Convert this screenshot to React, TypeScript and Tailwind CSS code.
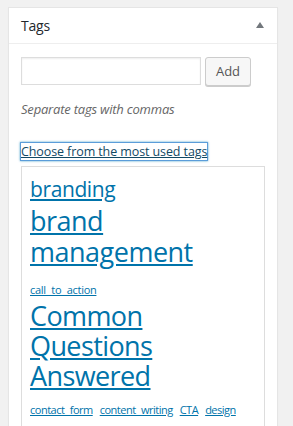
export default function App() {
  const small = ["contact form", "content writing", "CTA", "design"];

  return (
    <div className="h-[426px] overflow-hidden bg-[#f1f1f1] pt-[7px] pl-[8px] pr-[15px] font-['Open_Sans',sans-serif]">
      <div className="border border-[#e5e5e5] bg-white shadow-[0_1px_1px_rgba(0,0,0,0.04)]">
        <div className="flex h-[36px] items-center justify-between border-b border-[#eeeeee] pl-[12px] pr-[13px]">
          <h2 className="text-[14px] tracking-[-0.2px] text-[#23282d]">Tags</h2>
          <svg width="8" height="6" viewBox="0 0 8 6" className="mb-[1px]">
            <path d="M4 0L8 6H0Z" fill="#72777c" />
          </svg>
        </div>

        <div className="px-[12px] pt-[13px]">
          <div className="flex items-start">
            <input
              type="text"
              className="h-[28px] w-[180px] border border-[#dddddd] bg-white px-2 shadow-[inset_0_1px_2px_rgba(0,0,0,0.07)] outline-none"
            />
            <button className="ml-[4px] h-[29px] w-[46px] rounded-[3px] border border-[#cccccc] bg-[#f7f7f7] text-[13px] text-[#555555] shadow-[0_1px_0_#cccccc]">
              Add
            </button>
          </div>

          <p className="mt-[14px] text-[13px] italic leading-[18px] tracking-[-0.2px] text-[#666666]">
            Separate tags with commas
          </p>

          <div className="mt-[24px] flex">
            <a
              href="#"
              className="-ml-[1px] border border-[#5b9dd9] text-[12.5px] leading-[17px] tracking-[-0.1px] text-[#124964] underline shadow-[0_0_2px_rgba(30,140,190,0.8)]"
            >
              Choose from the most used tags
            </a>
          </div>

          <div className="mt-[5px] h-[300px] border border-[#dddddd] px-[8px] pt-[7px] text-[#0073aa]">
            <div>
              <a href="#" className="text-[21px] leading-[30px] tracking-[-0.4px] underline">branding</a>
            </div>
            <div className="mt-[2px] w-[200px]">
              <a href="#" className="text-[27px] leading-[30px] tracking-[-0.5px] underline">brand management</a>
            </div>
            <div className="mt-[8px]">
              <a href="#" className="text-[11px] leading-[16px] tracking-[-0.3px] underline [word-spacing:3px]">call to action</a>
            </div>
            <div className="mt-[2px] w-[200px]">
              <a href="#" className="text-[27px] leading-[28px] tracking-[-0.6px] underline">Common Questions Answered</a>
            </div>
            <div className="mt-[10px] flex gap-[7px]">
              {small.map((t) => (
                <a key={t} href="#" className="text-[11px] leading-[16px] tracking-[-0.5px] underline [word-spacing:3px]">{t}</a>
              ))}
            </div>
          </div>
        </div>
      </div>
    </div>
  );
}
